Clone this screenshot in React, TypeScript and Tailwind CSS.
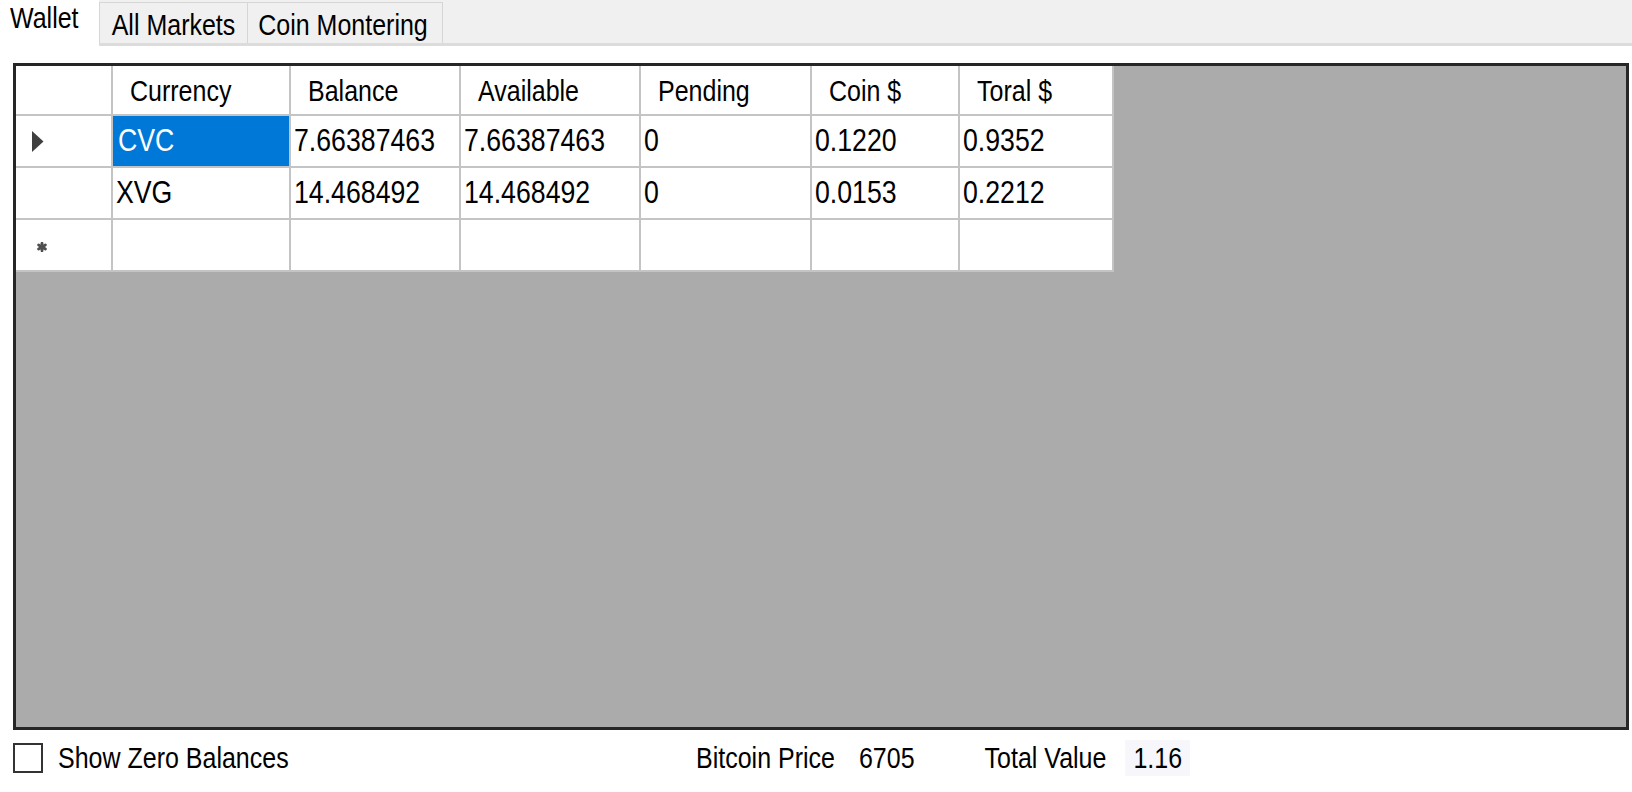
import React from "react";

const cols = ["Currency", "Balance", "Available", "Pending", "Coin $", "Toral $"];
const rows: string[][] = [
  ["CVC", "7.66387463", "7.66387463", "0", "0.1220", "0.9352"],
  ["XVG", "14.468492", "14.468492", "0", "0.0153", "0.2212"],
  ["", "", "", "", "", ""],
];

function L({ children, className = "" }: { children: React.ReactNode; className?: string }) {
  return <span className={"inline-block whitespace-nowrap scale-y-117 " + className}>{children}</span>;
}

function RowMarker({ kind }: { kind: "current" | "new" | "none" }) {
  if (kind === "current")
    return (
      <svg width="12" height="21" viewBox="0 0 12 21" className="ml-[16px]">
        <polygon points="0,0 11.5,10.5 0,21" fill="#404040" />
      </svg>
    );
  if (kind === "new")
    return (
      <svg width="10" height="10" viewBox="0 0 10 10" className="ml-[21px] mt-[4px]">
        <g stroke="#505050" strokeWidth="2.8" strokeLinecap="round">
          <line x1="5" y1="1.2" x2="5" y2="8.8" />
          <line x1="1.6" y1="3" x2="8.4" y2="7" />
          <line x1="1.6" y1="7" x2="8.4" y2="3" />
        </g>
      </svg>
    );
  return null;
}

export default function App() {
  return (
    <div className="w-[1632px] h-[792px] bg-white overflow-hidden text-black text-[25px] leading-none font-['Liberation_Sans',Arial,sans-serif]">
      {/* Tab strip */}
      <div className="flex h-[46px]">
        <div className="w-[99px] bg-white pl-[10px] pt-[6px]">
          <L>Wallet</L>
        </div>
        <div className="flex-1 flex bg-[#f0f0f0] border-b-[3px] border-[#dcdcdc] pt-[2px]">
          <div className="w-[149px] border border-b-0 border-[#d6d6d6] flex items-center justify-center pt-[4px]">
            <L>All Markets</L>
          </div>
          <div className="w-[195px] border border-b-0 border-l-0 border-[#d6d6d6] flex items-center justify-center pt-[4px] pr-[4px]">
            <L>Coin Montering</L>
          </div>
        </div>
      </div>

      {/* Data grid */}
      <div className="mt-[17px] ml-[13px] w-[1616px] h-[667px] border-[3px] border-[#262626] bg-[#ababab]">
        <div className="grid grid-cols-[97px_178px_170px_180px_171px_148px_154px] w-[1098px]">
          <div className="h-[50px] bg-white border-r-2 border-b-2 border-[#c4c4c4]" />
          {cols.map((c) => (
            <div
              key={c}
              className="h-[50px] bg-white border-r-2 border-b-2 border-[#c4c4c4] flex items-center pl-[17px] pt-[2px]"
            >
              <L>{c}</L>
            </div>
          ))}
          {rows.map((r, ri) => (
            <React.Fragment key={ri}>
              <div className="h-[52px] bg-white border-r-2 border-b-2 border-[#c4c4c4] flex items-center">
                <RowMarker kind={ri === 0 ? "current" : ri === 2 ? "new" : "none"} />
              </div>
              {r.map((v, ci) => (
                <div
                  key={ci}
                  className={
                    ri === 0 && ci === 0
                      ? "h-[52px] bg-[#0078d7] text-white border-r-2 border-b-2 border-[#c4c4c4] flex items-center pl-[5px] text-[26.7px]"
                      : "h-[52px] bg-white border-r-2 border-b-2 border-[#c4c4c4] flex items-center pl-[3px] text-[26.7px]"
                  }
                >
                  <span className="inline-block whitespace-nowrap scale-y-114">{v}</span>
                </div>
              ))}
            </React.Fragment>
          ))}
        </div>
      </div>

      {/* Bottom bar */}
      <div className="mt-[13px] pl-[13px] flex items-center h-[30px]">
        <div className="w-[683px] flex items-center">
          <div className="w-[30px] h-[30px] border-2 border-[#333] bg-white" />
          <L className="ml-[15px]">Show Zero Balances</L>
        </div>
        <L>Bitcoin Price</L>
        <L className="ml-[24px]">6705</L>
        <L className="ml-[70px]">Total Value</L>
        <span className="ml-[19px] h-[36px] px-[8px] bg-[#f6f6fb] flex items-center">
          <L>1.16</L>
        </span>
      </div>
    </div>
  );
}
